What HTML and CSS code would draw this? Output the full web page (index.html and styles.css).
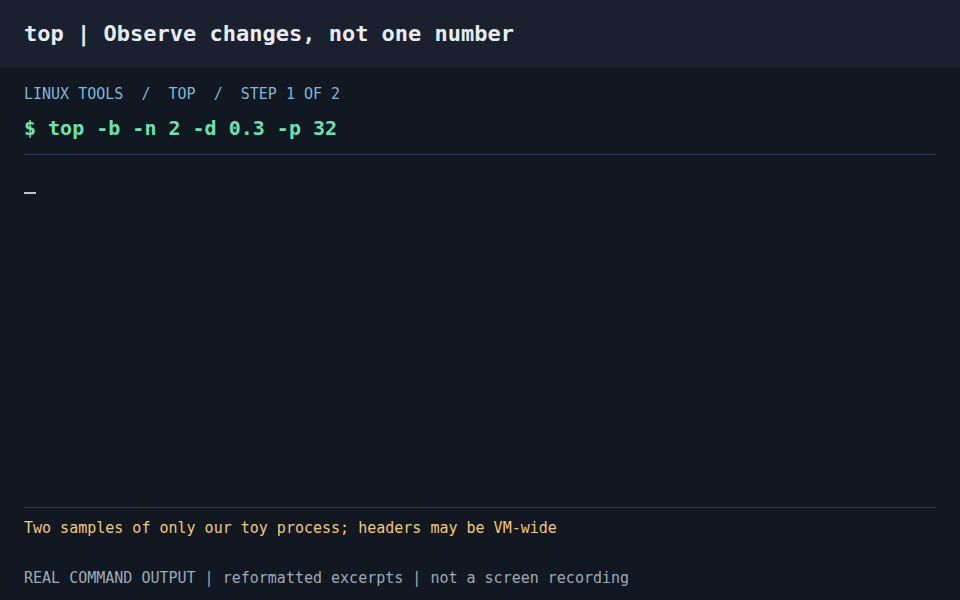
FILE: index.html
```html
<!DOCTYPE html>
<html lang="en">
<head>
<meta charset="utf-8">
<title>top | Observe changes, not one number</title>
<link rel="stylesheet" href="styles.css">
</head>
<body>
<header class="topbar">
  <h1 class="title">top | Observe changes, not one number</h1>
</header>
<main class="panel">
  <div class="crumbs">LINUX TOOLS&nbsp;&nbsp;/&nbsp;&nbsp;TOP&nbsp;&nbsp;/&nbsp;&nbsp;STEP 1 OF 2</div>
  <div class="command">$ top -b -n 2 -d 0.3 -p 32</div>
  <section class="output">
    <span class="cursor"></span>
  </section>
  <div class="note">Two samples of only our toy process; headers may be VM-wide</div>
  <footer class="footer">REAL COMMAND OUTPUT | reformatted excerpts | not a screen recording</footer>
</main>
</body>
</html>
```
FILE: styles.css
```css
html, body {
  margin: 0;
  padding: 0;
}
body {
  width: 960px;
  height: 600px;
  background: #111821;
  font-family: "DejaVu Sans Mono", "Liberation Mono", monospace;
  display: flex;
  flex-direction: column;
  overflow: hidden;
}
.topbar {
  height: 67px;
  background: #1a202d;
  padding: 0 24px;
  display: flex;
  align-items: center;
}
.title {
  margin: 0;
  font-size: 22px;
  font-weight: bold;
  color: #e6edf5;
  line-height: 28px;
}
.panel {
  flex: 1;
  display: flex;
  flex-direction: column;
  padding: 16px 24px 11px 24px;
}
.crumbs {
  font-size: 15px;
  line-height: 22px;
  color: #7fb6dc;
}
.command {
  margin-top: 9px;
  font-size: 20px;
  line-height: 28px;
  font-weight: bold;
  color: #6ee2ad;
  padding-bottom: 12px;
  border-bottom: 1px solid #2b3d52;
}
.output {
  flex: 1;
  padding-top: 37px;
}
.cursor {
  display: block;
  width: 12px;
  height: 2px;
  background: #b9c6d6;
}
.note {
  border-top: 1px solid #2c3a4c;
  padding-top: 9px;
  font-size: 15px;
  line-height: 22px;
  color: #f2c879;
}
.footer {
  margin-top: 28px;
  font-size: 15px;
  line-height: 22px;
  color: #9ea9b7;
}
```
